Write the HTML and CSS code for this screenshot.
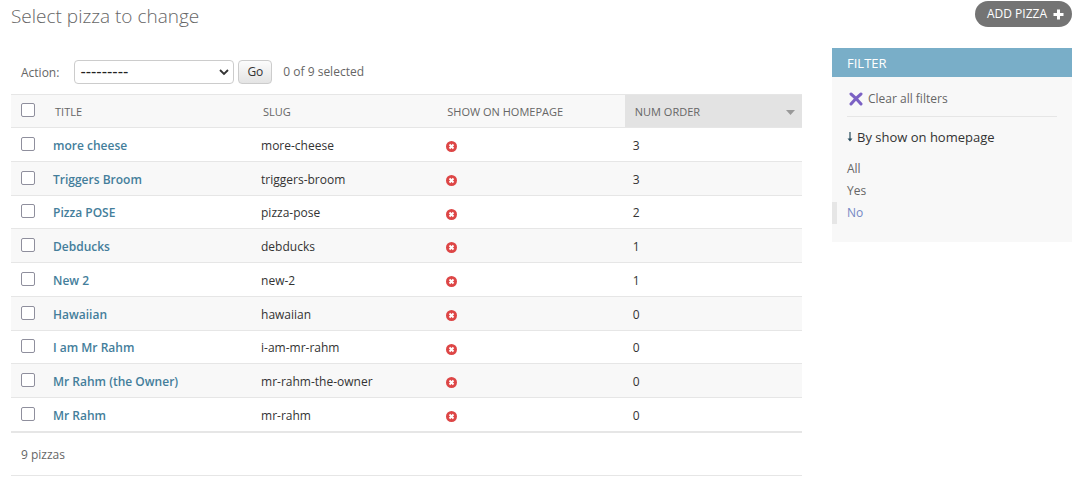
FILE: index.html
```html
<!DOCTYPE html>
<html lang="en">
<head>
<meta charset="utf-8">
<meta name="viewport" content="width=device-width, initial-scale=1">
<title>Select pizza to change</title>
<link rel="stylesheet" href="styles.css">
</head>
<body>
<svg class="sprite" aria-hidden="true">
  <symbol id="icon-no" viewBox="0 0 11 11">
    <circle cx="5.5" cy="5.5" r="5.5" fill="#dd4646"/>
    <path d="M3.5 3.5l4 4M7.5 3.5l-4 4" stroke="#fff" stroke-width="1.9" fill="none"/>
  </symbol>
</svg>
<header class="page-header">
  <h1 class="page-title">Select pizza to change</h1>
  <a class="add-link" href="#add">ADD PIZZA
    <svg class="add-icon" viewBox="0 0 11 11" aria-hidden="true"><path d="M5.5 0.5v10M0.5 5.5h10" stroke="#fff" stroke-width="3"/></svg>
  </a>
</header>
<div class="changelist">
  <main class="results">
    <form class="actions">
      <label class="action-label" for="action">Action:</label>
      <select class="action-select" id="action"><option>---------</option><option>Delete selected pizzas</option></select>
      <button class="action-go" type="button">Go</button>
      <span class="action-count">0 of 9 selected</span>
    </form>
    <table class="table">
      <colgroup><col class="col-check"><col class="col-title"><col class="col-slug"><col class="col-show"><col class="col-num"></colgroup>
      <thead>
        <tr>
          <th class="check-cell"><input class="check" type="checkbox" aria-label="Select all pizzas"></th>
          <th>TITLE</th><th>SLUG</th><th>SHOW ON HOMEPAGE</th>
          <th class="sorted"><div class="sort-head">NUM ORDER <svg class="sort-icon" viewBox="0 0 9 5" aria-hidden="true"><path d="M0 0h9L4.500 5z" fill="#999"/></svg></div></th>
        </tr>
      </thead>
      <tbody>
        <tr><td class="check-cell"><input class="check" type="checkbox" aria-label="Select more cheese"></td><td><a class="row-link" href="#1">more cheese</a></td><td>more-cheese</td><td><svg class="no-icon" role="img" aria-label="No"><use href="#icon-no"/></svg></td><td>3</td></tr>
        <tr><td class="check-cell"><input class="check" type="checkbox" aria-label="Select Triggers Broom"></td><td><a class="row-link" href="#2">Triggers Broom</a></td><td>triggers-broom</td><td><svg class="no-icon" role="img" aria-label="No"><use href="#icon-no"/></svg></td><td>3</td></tr>
        <tr><td class="check-cell"><input class="check" type="checkbox" aria-label="Select Pizza POSE"></td><td><a class="row-link" href="#3">Pizza POSE</a></td><td>pizza-pose</td><td><svg class="no-icon" role="img" aria-label="No"><use href="#icon-no"/></svg></td><td>2</td></tr>
        <tr><td class="check-cell"><input class="check" type="checkbox" aria-label="Select Debducks"></td><td><a class="row-link" href="#4">Debducks</a></td><td>debducks</td><td><svg class="no-icon" role="img" aria-label="No"><use href="#icon-no"/></svg></td><td>1</td></tr>
        <tr><td class="check-cell"><input class="check" type="checkbox" aria-label="Select New 2"></td><td><a class="row-link" href="#5">New 2</a></td><td>new-2</td><td><svg class="no-icon" role="img" aria-label="No"><use href="#icon-no"/></svg></td><td>1</td></tr>
        <tr><td class="check-cell"><input class="check" type="checkbox" aria-label="Select Hawaiian"></td><td><a class="row-link" href="#6">Hawaiian</a></td><td>hawaiian</td><td><svg class="no-icon" role="img" aria-label="No"><use href="#icon-no"/></svg></td><td>0</td></tr>
        <tr><td class="check-cell"><input class="check" type="checkbox" aria-label="Select I am Mr Rahm"></td><td><a class="row-link" href="#7">I am Mr Rahm</a></td><td>i-am-mr-rahm</td><td><svg class="no-icon" role="img" aria-label="No"><use href="#icon-no"/></svg></td><td>0</td></tr>
        <tr><td class="check-cell"><input class="check" type="checkbox" aria-label="Select Mr Rahm (the Owner)"></td><td><a class="row-link" href="#8">Mr Rahm (the Owner)</a></td><td>mr-rahm-the-owner</td><td><svg class="no-icon" role="img" aria-label="No"><use href="#icon-no"/></svg></td><td>0</td></tr>
        <tr><td class="check-cell"><input class="check" type="checkbox" aria-label="Select Mr Rahm"></td><td><a class="row-link" href="#9">Mr Rahm</a></td><td>mr-rahm</td><td><svg class="no-icon" role="img" aria-label="No"><use href="#icon-no"/></svg></td><td>0</td></tr>
      </tbody>
    </table>
    <p class="paginator">9 pizzas</p>
  </main>
  <aside class="filter">
    <h2 class="filter-title">FILTER</h2>
    <div class="filter-clear">
      <a class="clear-link" href="#clear"><svg class="clear-icon" viewBox="0 0 14 14" aria-hidden="true"><path d="M2 2Q7 6 12 12M12 2Q7 6 2 12" stroke="#7b61c4" stroke-width="3" stroke-linecap="round" fill="none"/></svg>Clear all filters</a>
    </div>
    <h3 class="filter-heading"><svg class="down-icon" viewBox="0 0 6 10" aria-hidden="true"><path d="M3 0v8" stroke="#264b5d" stroke-width="1.200"/><path d="M.5 6.500L3 9.500l2.500-3z" fill="#264b5d"/></svg>By show on homepage</h3>
    <ul class="filter-list">
      <li class="filter-item"><a class="filter-link" href="#all">All</a></li>
      <li class="filter-item"><a class="filter-link" href="#yes">Yes</a></li>
      <li class="filter-item selected"><a class="filter-link" href="#no">No</a></li>
    </ul>
  </aside>
</div>
</body>
</html>
```
FILE: styles.css
```css
* { box-sizing: border-box; }
body {
  margin: 0;
  padding: 0 10px 0 11px;
  background: #fff;
  color: #333;
  font: 12px/18px "Open Sans", "Noto Sans", sans-serif;
}
.sprite { display: none; }
a { text-decoration: none; }
.page-header { display: flex; justify-content: space-between; align-items: flex-start; height: 48px; }
.page-title { margin: 0; padding-top: 4px; font-size: 19px; line-height: 24px; font-weight: 300; color: #666; }
.add-link {
  display: flex; align-items: center; gap: 6px;
  margin-top: 1px; padding: 4px 8px 4px 12px;
  border-radius: 13px;
  background: #747474; color: #fff;
}
.add-icon { width: 11px; height: 11px; }
.changelist { display: flex; align-items: flex-start; gap: 30px; }
.results { flex: 1; min-width: 0; }
.actions { display: flex; align-items: center; padding: 12px 10px 10px; color: #666; }
.action-label { margin-right: 15px; padding-top: 2px; }
.action-select {
  appearance: none;
  width: 160px; height: 24px; padding: 0 20px 0 5px;
  border: 1px solid #ccc; border-radius: 4px;
  background: #fff url("data:image/svg+xml,%3Csvg xmlns='http://www.w3.org/2000/svg' width='10' height='7'%3E%3Cpath d='M1 1l4 4 4-4' fill='none' stroke='%23333' stroke-width='1.8'/%3E%3C/svg%3E") no-repeat right 4px center;
  color: #222; font: 16px/22px "Liberation Sans", sans-serif;
}
.action-go {
  height: 24px; margin: 0 11px 0 4px; padding: 0 8px;
  border: 1px solid #ccc; border-radius: 4px;
  background: linear-gradient(#fcfcfc, #e4e4e4);
  color: #333; font: inherit;
}
.table { width: 100%; table-layout: fixed; border-collapse: separate; border-spacing: 0; border-bottom: 1px solid #e6e6e6; }
.col-check { width: 34px; }
.col-title { width: 26.3%; }
.col-slug { width: 23.3%; }
.col-show { width: 23.7%; }
.table th {
  height: 34px; padding: 2px 10px 0;
  border-top: 1px solid #e6e6e6; border-bottom: 1px solid #e6e6e6;
  background: #f8f8f8; color: #666;
  font-size: 11px; line-height: 16px; font-weight: 500; text-align: left;
}
.table .sorted { background: #e3e3e3; }
.sort-head { display: flex; justify-content: space-between; align-items: center; margin-right: -3px; }
.sort-icon { width: 9px; height: 5px; }
.table td { height: 34px; padding: 2px 8px 0; border-bottom: 1px solid #e6e6e6; }
.table tbody tr:nth-child(4n+3) td { height: 33px; }
.table tbody tr:nth-child(even) { background: #f8f8f8; }
.table .check-cell { padding: 0 0 2px 10px; }
.check {
  appearance: none; display: block;
  width: 14px; height: 14px; margin: 0;
  border: 1px solid #8f8f9d; border-radius: 2px; background: #fff;
}
.check:checked { background: #447e9b; }
.row-link { color: #447e9b; font-weight: 600; }
.no-icon { display: block; width: 11px; height: 11px; margin: 2px 0 0 1px; }
.paginator { margin: 0; padding: 13px 10px 11px; border-bottom: 1px solid #e6e6e6; color: #666; }
.filter { width: 240px; padding-bottom: 18px; background: #f8f8f8; }
.filter-title { margin: 0; padding: 6px 15px 5px; background: #79aec8; color: #fff; font-size: 13px; line-height: 18px; font-weight: 400; }
.filter-clear { margin: 0 15px; padding: 13px 0 8px; border-bottom: 1px solid #e6e6e6; }
.clear-link { display: flex; align-items: center; gap: 5px; padding-left: 2px; color: #666; }
.clear-icon { width: 14px; height: 14px; }
.filter-heading { display: flex; align-items: center; gap: 4px; margin: 0; padding: 11px 15px 12px; font-size: 13px; line-height: 18px; font-weight: 400; }
.down-icon { width: 6px; height: 10px; }
.filter-list { margin: 0; padding: 0; list-style: none; }
.filter-item { padding: 0 10px; border-left: 5px solid transparent; line-height: 22px; }
.filter-link { color: #666; }
.filter-item.selected { border-left-color: #e6e6e6; }
.filter-item.selected .filter-link { color: #7487c4; }
```
